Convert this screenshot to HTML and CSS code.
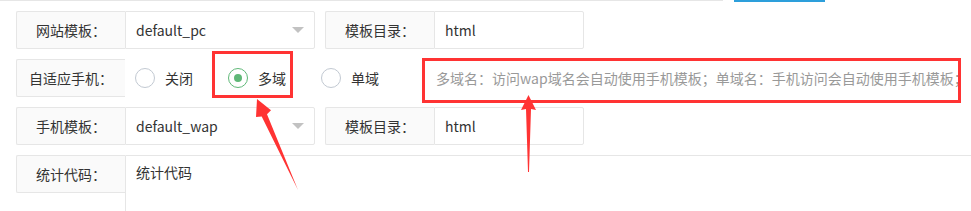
FILE: index.html
```html
<!DOCTYPE html>
<html lang="zh-CN">
<head>
  <meta charset="UTF-8">
  <meta name="viewport" content="width=device-width, initial-scale=1.0">
  <title>模板设置</title>
  <link rel="stylesheet" href="styles.css">
</head>
<body>
  <div class="page">
    <div class="top-edge">
      <div class="top-line"></div>
      <div class="top-btn"></div>
    </div>

    <form class="form">
      <div class="form-item">
        <div class="inline">
          <label class="form-label">网站模板：</label>
          <div class="select wide">
            <span>default_pc</span>
            <i class="caret"></i>
          </div>
        </div>
        <div class="inline">
          <label class="form-label">模板目录：</label>
          <div class="input narrow">html</div>
        </div>
      </div>

      <div class="form-item">
        <label class="form-label">自适应手机：</label>
        <div class="radios">
          <div class="radio">
            <span class="radio-icon"></span>
            <span>关闭</span>
          </div>
          <div class="radio checked">
            <span class="radio-icon"></span>
            <span>多域</span>
          </div>
          <div class="radio">
            <span class="radio-icon"></span>
            <span>单域</span>
          </div>
        </div>
        <div class="word-aux">多域名：访问wap域名会自动使用手机模板；单域名：手机访问会自动使用手机模板；</div>
      </div>

      <div class="form-item">
        <div class="inline">
          <label class="form-label">手机模板：</label>
          <div class="select wide">
            <span>default_wap</span>
            <i class="caret"></i>
          </div>
        </div>
        <div class="inline">
          <label class="form-label">模板目录：</label>
          <div class="input narrow">html</div>
        </div>
      </div>

      <div class="form-item text-item">
        <label class="form-label">统计代码：</label>
        <div class="textarea">统计代码</div>
      </div>
    </form>

    <svg class="marks" width="971" height="211" viewBox="0 0 971 211">
      <rect x="213.5" y="52.5" width="78" height="44" fill="none" stroke="#f33" stroke-width="3"/>
      <rect x="423.5" y="59.5" width="536" height="42" fill="none" stroke="#f33" stroke-width="3"/>
      <polygon points="257,99 271,110.3 267,114.2 298,190 261.7,116.6 256,117" fill="#f33"/>
      <polygon points="528.5,95 536,110 531,109 529,172 528,172 526,109 521,110" fill="#f33"/>
    </svg>
  </div>
</body>
</html>
```

FILE: styles.css
```css
body {
  margin: 0;
  overflow: hidden;
  font-family: "Noto Sans CJK SC", "Liberation Sans", sans-serif;
  font-size: 14px;
  color: #333;
  background: #fff;
}

.page {
  position: relative;
  width: 971px;
  height: 211px;
  overflow: hidden;
}

.top-edge {
  display: flex;
  height: 2px;
}

.top-line {
  width: 723px;
  height: 1px;
  background-color: #e6e6e6;
}

.top-btn {
  width: 91px;
  height: 2px;
  margin-left: 11px;
  background-color: #2d9fdb;
}

.form {
  padding: 9px 0 0 16px;
}

.form-item {
  display: flex;
  align-items: center;
  height: 38px;
  margin-bottom: 10px;
}

.inline {
  display: flex;
  margin-right: 10px;
}

.form-label {
  box-sizing: border-box;
  flex-shrink: 0;
  width: 109px;
  height: 38px;
  line-height: 36px;
  text-align: center;
  background-color: #fafafa;
  border: 1px solid #e6e6e6;
  border-right: none;
  border-radius: 2px 0 0 2px;
  white-space: nowrap;
}

.input,
.select {
  box-sizing: border-box;
  height: 38px;
  line-height: 36px;
  padding: 0 10px;
  border: 1px solid #e6e6e6;
  border-radius: 0 2px 2px 0;
  background-color: #fff;
}

.wide {
  width: 190px;
}

.narrow {
  width: 150px;
}

.select {
  display: flex;
  align-items: center;
  justify-content: space-between;
}

.caret {
  width: 0;
  height: 0;
  border-left: 6px solid transparent;
  border-right: 6px solid transparent;
  border-top: 6px solid #c2c2c2;
}

.radios {
  display: flex;
  align-items: center;
  padding-left: 10px;
}

.radio {
  display: flex;
  align-items: center;
  gap: 10px;
  margin-right: 35px;
}

.radio-icon {
  box-sizing: border-box;
  width: 20px;
  height: 20px;
  border: 1.5px solid #c2c9d2;
  border-radius: 50%;
  display: flex;
  align-items: center;
  justify-content: center;
}

.radio.checked .radio-icon {
  border-color: #5fb878;
}

.radio.checked .radio-icon::after {
  content: "";
  width: 8px;
  height: 8px;
  border-radius: 50%;
  background-color: #5fb878;
}

.word-aux {
  margin-left: 22px;
  color: #999;
  white-space: nowrap;
}

.text-item {
  align-items: flex-start;
}

.textarea {
  box-sizing: border-box;
  flex-shrink: 0;
  width: 900px;
  min-height: 100px;
  padding: 6px 10px;
  line-height: 20px;
  border: 1px solid #e6e6e6;
  border-radius: 0 2px 2px 0;
}

.marks {
  position: absolute;
  top: 0;
  left: 0;
  pointer-events: none;
}
```
